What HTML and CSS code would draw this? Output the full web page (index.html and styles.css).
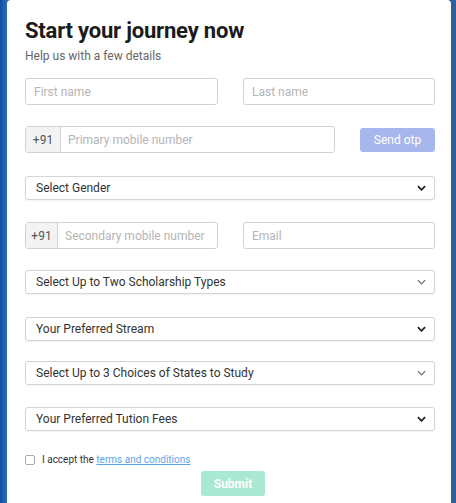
FILE: index.html
```html
<!DOCTYPE html>
<html>
<head>
<meta charset="utf-8">
<link rel="stylesheet" href="styles.css">
</head>
<body>
<div class="frame">
  <div class="card">
    <h1 class="title">Start your journey now</h1>
    <p class="subtitle">Help us with a few details</p>
    <div class="row two">
      <div class="field"><span class="ph">First name</span></div>
      <div class="field"><span class="ph">Last name</span></div>
    </div>
    <div class="row phone-row">
      <div class="field group">
        <span class="prefix">+91</span>
        <span class="ph">Primary mobile number</span>
      </div>
      <button class="otp">Send otp</button>
    </div>
    <div class="select"><span>Select Gender</span><svg class="chev" viewBox="0 0 10 6"><path d="M1 1l4 4 4-4" /></svg></div>
    <div class="row two second">
      <div class="field group">
        <span class="prefix small">+91</span>
        <span class="ph">Secondary mobile number</span>
      </div>
      <div class="field"><span class="ph">Email</span></div>
    </div>
    <div class="select"><span>Select Up to Two Scholarship Types</span><svg class="chev thin" viewBox="0 0 10 6"><path d="M1 1l4 4 4-4" /></svg></div>
    <div class="select stream"><span>Your Preferred Stream</span><svg class="chev" viewBox="0 0 10 6"><path d="M1 1l4 4 4-4" /></svg></div>
    <div class="select states"><span>Select Up to 3 Choices of States to Study</span><svg class="chev thin" viewBox="0 0 10 6"><path d="M1 1l4 4 4-4" /></svg></div>
    <div class="select"><span>Your Preferred Tution Fees</span><svg class="chev" viewBox="0 0 10 6"><path d="M1 1l4 4 4-4" /></svg></div>
    <label class="accept"><span class="box"></span>I accept the <a class="link">terms and conditions</a></label>
    <div class="submit-wrap"><button class="submit">Submit</button></div>
  </div>
</div>
</body>
</html>
```
FILE: styles.css
```css
* { box-sizing: border-box; }
html, body { margin: 0; padding: 0; }
body {
  width: 456px;
  height: 503px;
  overflow: hidden;
  background: #1d5aa6;
  font-family: Roboto, "Noto Sans", sans-serif;
}
.frame {
  height: 503px;
  padding: 0 5px 0 7px;
  background: linear-gradient(90deg, #0f4ea3 0, #2a6fb8 7px, #2e5f9a 100%);
}
.card {
  background: #fff;
  height: 503px;
  border-radius: 4px 4px 0 0;
  padding: 17px 16px 0 18px;
  display: flex;
  flex-direction: column;
}
.title {
  margin: 0;
  font-size: 22px;
  font-weight: 700;
  color: #1b1b1b;
  line-height: 28px;
  letter-spacing: -0.2px;
}
.subtitle {
  margin: 3px 0 0 0;
  font-size: 12px;
  color: #666;
  line-height: 16px;
}
.row {
  display: flex;
  gap: 25px;
}
.two { margin-top: 14px; }
.two.second { margin-top: 22px; }
.two > .field { flex: 0 0 193px; }
.two > .field + .field { flex: 1; }
.field {
  height: 27px;
  border: 1px solid #d2d2d2;
  border-radius: 3px;
  display: flex;
  align-items: center;
  padding: 0 8px;
  font-size: 12px;
}
.ph { color: #b5b5b5; white-space: nowrap; overflow: hidden; }
.group { padding: 0; }
.group .ph { padding-left: 7px; }
.prefix {
  height: 100%;
  width: 35px;
  display: flex;
  align-items: center;
  justify-content: center;
  background: #f3f3f3;
  border-right: 1px solid #d2d2d2;
  color: #555;
  font-size: 12px;
  flex: none;
}
.prefix.small { width: 32px; }
.phone-row { margin-top: 21px; align-items: center; }
.phone-row .field { flex: 0 0 310px; }
.otp {
  margin-left: auto;
  width: 75px;
  height: 24px;
  border: none;
  border-radius: 3px;
  background: #a7b6ec;
  color: #fff;
  font-family: inherit;
  font-size: 12px;
  padding: 0;
}
.select {
  height: 24px;
  border: 1px solid #d4d4d4;
  border-radius: 3px;
  box-shadow: 0 1px 2px rgba(0,0,0,0.06);
  display: flex;
  align-items: center;
  justify-content: space-between;
  padding: 0 8px 0 10px;
  font-size: 12px;
  color: #333;
  margin-top: 21px;
}
.phone-row + .select { margin-top: 23px; }
.select + .select { margin-top: 22px; }
.select + .select.stream { margin-top: 23px; }
.select + .select.states { margin-top: 20px; }
.chev { width: 9px; height: 6px; fill: none; stroke: #222; stroke-width: 2; }
.chev.thin { stroke: #666; stroke-width: 1.3; }
.accept {
  margin-top: 23px;
  display: flex;
  align-items: center;
  font-size: 10px;
  color: #333;
  white-space: pre;
}
.box {
  width: 10px;
  height: 10px;
  border: 1px solid #aaa;
  border-radius: 2px;
  margin-right: 7px;
}
.link { color: #5aa5e6; text-decoration: underline; }
.submit-wrap { display: flex; justify-content: center; margin-top: 6px; }
.submit {
  width: 64px;
  height: 25px;
  border: none;
  border-radius: 3px;
  background: #a9e8d2;
  color: #fff;
  font-family: inherit;
  font-size: 12px;
  font-weight: 700;
  margin-left: 6px;
}
```
